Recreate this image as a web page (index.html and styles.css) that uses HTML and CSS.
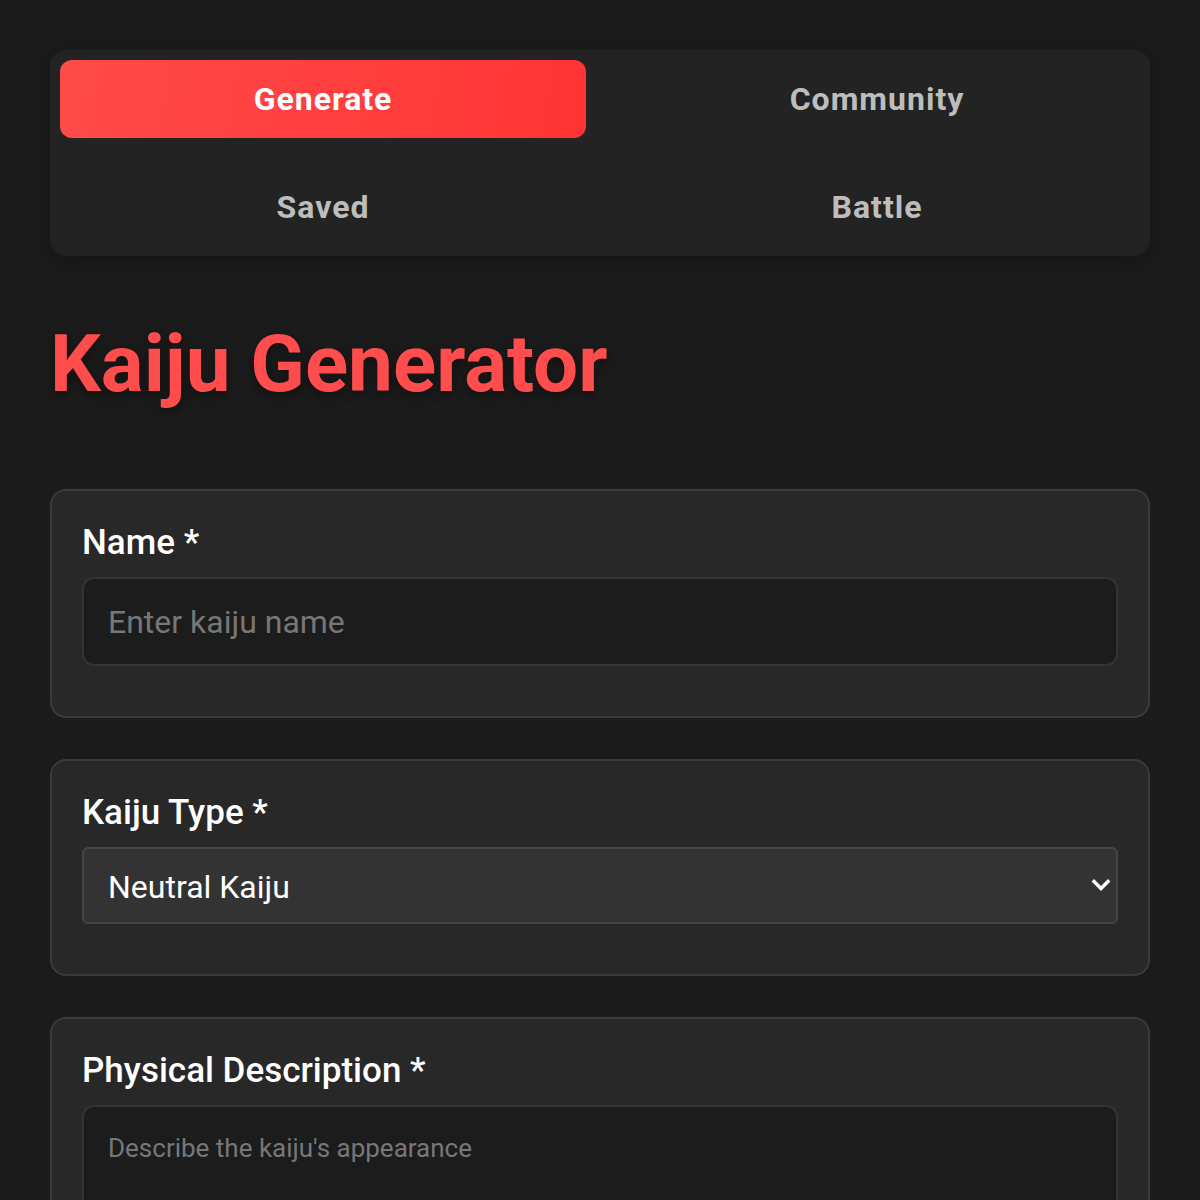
FILE: index.html
```html
<!DOCTYPE html>
<html lang="en">
<head>
    <meta charset="UTF-8" />
    <meta name="viewport" content="width=device-width, initial-scale=1.0" />
    <title>Kaiju Generator</title>
    <link rel="stylesheet" href="styles.css">
</head>
<body>
    <div class="container">
        <nav class="tabs">
            <button class="tab active">Generate</button>
            <button class="tab">Community</button>
            <button class="tab">Saved</button>
            <button class="tab">Battle</button>
        </nav>

        <h1 class="title">Kaiju Generator</h1>

        <form class="kaiju-form" onsubmit="event.preventDefault();">
            <div class="card">
                <label for="name">Name *</label>
                <input type="text" id="name" placeholder="Enter kaiju name">
            </div>

            <div class="card">
                <label for="type">Kaiju Type *</label>
                <div class="select-wrap">
                    <select id="type">
                        <option>Neutral Kaiju</option>
                        <option>Hero Kaiju</option>
                        <option>Villain Kaiju</option>
                    </select>
                    <!-- custom dropdown arrow -->
                    <svg class="chevron" width="20" height="14" viewBox="0 0 20 14">
                        <path d="M3 3.5 L10 10.5 L17 3.5" fill="none" stroke="#fff" stroke-width="3.4" stroke-linecap="square"/>
                    </svg>
                </div>
            </div>

            <div class="card">
                <label for="desc">Physical Description *</label>
                <textarea id="desc" rows="5" placeholder="Describe the kaiju's appearance"></textarea>
            </div>
        </form>
    </div>
</body>
</html>
```

FILE: styles.css
```css
body {
    margin: 0;
    background: #1b1b1b;
    color: #fff;
    font-family: Roboto, 'Noto Sans', sans-serif;
}

.container {
    padding: 50px;
}

/* Tabs */
.tabs {
    display: grid;
    grid-template-columns: 1fr 1fr;
    column-gap: 28px;
    row-gap: 30px;
    padding: 10px;
    background: #232323;
    border-radius: 16px;
    box-shadow: 0 4px 20px rgba(0, 0, 0, 0.25);
}

.tab {
    height: 78px;
    border: none;
    border-radius: 12px;
    background: transparent;
    color: #bdbdbd;
    font-family: Roboto, sans-serif;
    font-size: 32px;
    font-weight: 700;
    letter-spacing: 1px;
    cursor: pointer;
}

.tab.active {
    background: linear-gradient(100deg, #ff4b4b, #ff3434);
    color: #fff;
}

/* Title */
.title {
    margin: 60px 0 77px;
    font-size: 80px;
    line-height: 96px;
    font-weight: 700;
    color: #ff4d4d;
    text-shadow: 0 4px 12px rgba(0, 0, 0, 0.4);
}

/* Form cards */
.kaiju-form {
    display: flex;
    flex-direction: column;
    gap: 41px;
}

.card {
    display: flex;
    flex-direction: column;
    padding: 31px 30px 50px;
    background: #282828;
    border: 2px solid #3a3a3a;
    border-radius: 16px;
}

.card label {
    font-size: 35px;
    line-height: 42px;
    font-weight: 500;
    margin-bottom: 13px;
}

input, textarea {
    padding: 25px 24px 23px;
    font-family: Roboto, sans-serif;
    font-size: 32px;
    line-height: 37px;
    color: #eee;
    background: #1c1c1c;
    border: 2px solid #333;
    border-radius: 12px;
}

input::placeholder, textarea::placeholder {
    color: #777;
}

textarea {
    font-size: 26px;
    line-height: 32px;
    resize: vertical;
}

.select-wrap {
    position: relative;
    display: flex;
    flex-direction: column;
}

select {
    appearance: none;
    height: 77px;
    padding: 2px 24px 0;
    font-family: Roboto, sans-serif;
    font-size: 32px;
    color: #fff;
    background: #333;
    border: 2px solid #444;
    border-radius: 6px;
}

.chevron {
    position: absolute;
    right: 7px;
    top: 31px;
    pointer-events: none;
}
```
